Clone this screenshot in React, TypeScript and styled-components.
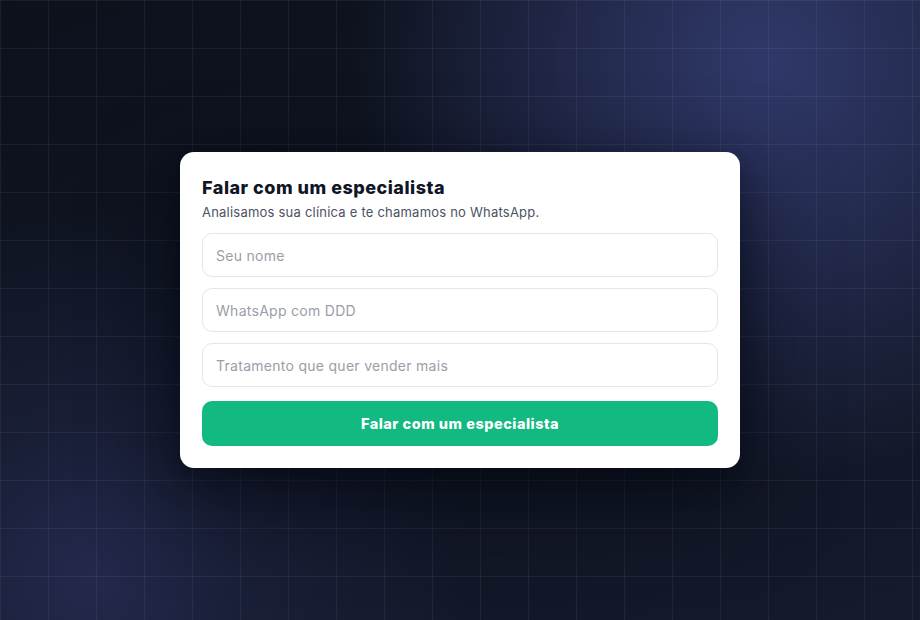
import React from "react";
import styled, { createGlobalStyle } from "styled-components";

const GlobalStyle = createGlobalStyle`
  html, body { margin: 0; padding: 0; }
  body { font-family: "Inter", "Open Sans", sans-serif; }
  * { box-sizing: border-box; }
`;

const Page = styled.main`
  width: 920px;
  height: 620px;
  display: flex;
  align-items: center;
  justify-content: center;
  background-color: #0e1320;
  background-image:
    linear-gradient(rgba(255, 255, 255, 0.055) 1px, transparent 1px),
    linear-gradient(90deg, rgba(255, 255, 255, 0.055) 1px, transparent 1px),
    radial-gradient(circle at 770px 60px, #30386a 0px, rgba(46, 55, 102, 0.75) 140px, rgba(30, 36, 70, 0) 420px),
    radial-gradient(circle at 90px 580px, rgba(36, 42, 78, 0.95) 0px, rgba(30, 36, 66, 0.6) 160px, rgba(20, 24, 44, 0) 380px),
    linear-gradient(160deg, #0d111c 0%, #101523 50%, #151a2c 100%);
  background-size: 48px 48px, 48px 48px, 100% 100%, 100% 100%, 100% 100%;
`;

const Card = styled.section`
  width: 560px;
  background: #ffffff;
  border-radius: 14px;
  padding: 24px 22px 22px;
  box-shadow: 0 30px 90px rgba(3, 6, 14, 0.6), 0 10px 30px rgba(3, 6, 14, 0.35);
  display: flex;
  flex-direction: column;
`;

const Title = styled.h2`
  margin: 0;
  font-size: 18px;
  line-height: 24px;
  font-weight: 800;
  color: #101626;
  letter-spacing: 0.5px;
`;

const Subtitle = styled.p`
  margin: 3px 0 12px;
  font-size: 13px;
  line-height: 18px;
  color: #4b5262;
  letter-spacing: 0.22px;
`;

const Form = styled.form`
  display: flex;
  flex-direction: column;
  gap: 11px;
`;

const Input = styled.input`
  width: 100%;
  height: 44px;
  border: 1px solid #e4e6ea;
  border-radius: 10px;
  padding: 0 13px;
  font-family: inherit;
  font-size: 14px;
  letter-spacing: 0.28px;
  color: #111827;
  background: #ffffff;
  outline: none;
  &::placeholder { color: #9a9ea8; }
`;

const Button = styled.button`
  margin-top: 3px;
  height: 45px;
  width: 100%;
  border: none;
  border-radius: 10px;
  background: #12b981;
  color: #ffffff;
  font-family: inherit;
  font-size: 14.5px;
  font-weight: 800;
  letter-spacing: 0.5px;
  cursor: pointer;
`;

export default function App() {
  return (
    <>
      <GlobalStyle />
      <Page>
        <Card>
          <Title>Falar com um especialista</Title>
          <Subtitle>Analisamos sua clínica e te chamamos no WhatsApp.</Subtitle>
          <Form onSubmit={(e) => e.preventDefault()}>
            <Input placeholder="Seu nome" />
            <Input placeholder="WhatsApp com DDD" />
            <Input placeholder="Tratamento que quer vender mais" />
            <Button type="submit">Falar com um especialista</Button>
          </Form>
        </Card>
      </Page>
    </>
  );
}
